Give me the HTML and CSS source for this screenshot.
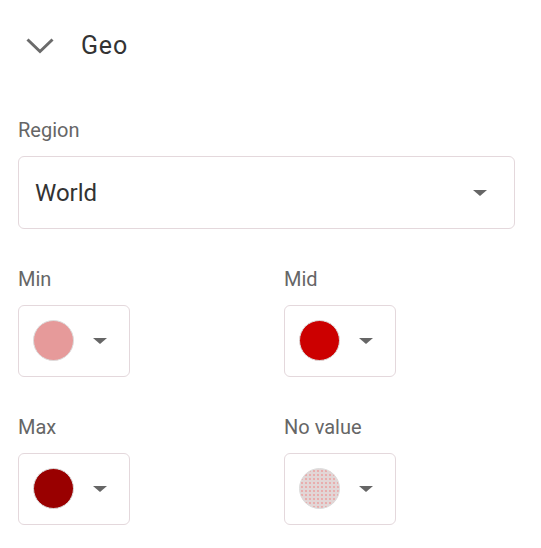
FILE: index.html
```html
<!DOCTYPE html>
<html>
<head>
<meta charset="utf-8">
<link rel="stylesheet" href="styles.css">
</head>
<body>
<div class="panel">
  <div class="header">
    <svg class="chevron" width="28" height="16" viewBox="0 0 28 16"><polyline points="1.5,1.5 14,13.5 26.5,1.5" fill="none" stroke="#6b6b6b" stroke-width="3"/></svg>
    <span class="title">Geo</span>
  </div>
  <div class="content">
    <div class="field">
      <div class="label">Region</div>
      <div class="select">
        <span class="select-value">World</span>
        <span class="arrow"></span>
      </div>
    </div>
    <div class="colors">
      <div class="field">
        <div class="label">Min</div>
        <div class="swatch-box"><span class="swatch swatch-min"></span><span class="arrow"></span></div>
      </div>
      <div class="field">
        <div class="label">Mid</div>
        <div class="swatch-box"><span class="swatch swatch-mid"></span><span class="arrow"></span></div>
      </div>
      <div class="field">
        <div class="label">Max</div>
        <div class="swatch-box"><span class="swatch swatch-max"></span><span class="arrow"></span></div>
      </div>
      <div class="field">
        <div class="label">No value</div>
        <div class="swatch-box"><span class="swatch swatch-none"></span><span class="arrow"></span></div>
      </div>
    </div>
  </div>
</div>
</body>
</html>
```
FILE: styles.css
```css
html, body {
  margin: 0;
  padding: 0;
  background: #fff;
}
body {
  font-family: Roboto, "Noto Sans", sans-serif;
  width: 541px;
  height: 548px;
  overflow: hidden;
}
.header {
  height: 92px;
  display: flex;
  align-items: center;
  padding-left: 26px;
}
.chevron {
  display: block;
  margin-right: 27px;
}
.title {
  font-size: 25px;
  letter-spacing: 0.8px;
  color: #333;
  line-height: 28px;
}
.content {
  padding: 26px 26px 0 18px;
}
.field {
  display: flex;
  flex-direction: column;
  gap: 14px;
}
.label {
  font-size: 20px;
  line-height: 24px;
  color: #666;
}
.select {
  box-sizing: border-box;
  height: 73px;
  border: 1px solid #e4d8dc;
  border-radius: 6px;
  display: flex;
  align-items: center;
  justify-content: space-between;
  padding: 0 27px 0 16px;
}
.select-value {
  font-size: 24px;
  color: #333;
}
.arrow {
  width: 0;
  height: 0;
  border-left: 7px solid transparent;
  border-right: 7px solid transparent;
  border-top: 6px solid #666;
}
.colors {
  margin-top: 38px;
  display: grid;
  grid-template-columns: 266px 1fr;
  row-gap: 38px;
}
.swatch-box {
  box-sizing: border-box;
  width: 112px;
  height: 72px;
  border: 1px solid #e4d8dc;
  border-radius: 6px;
  display: flex;
  align-items: center;
  padding: 0 0 2px 14px;
  gap: 19px;
}
.swatch-box .arrow {
  margin-top: 2px;
}
.swatch {
  box-sizing: border-box;
  width: 41px;
  height: 41px;
  border-radius: 50%;
  border: 1px solid #ddd;
}
.swatch-min { background: #e69a9a; }
.swatch-mid { background: #cc0000; }
.swatch-max { background: #990000; }
.swatch-none {
  background-color: #e2d6d6;
  background-image: radial-gradient(circle, rgba(240, 130, 130, 0.75) 0.6px, transparent 0.9px);
  background-size: 4px 4px;
}
```
